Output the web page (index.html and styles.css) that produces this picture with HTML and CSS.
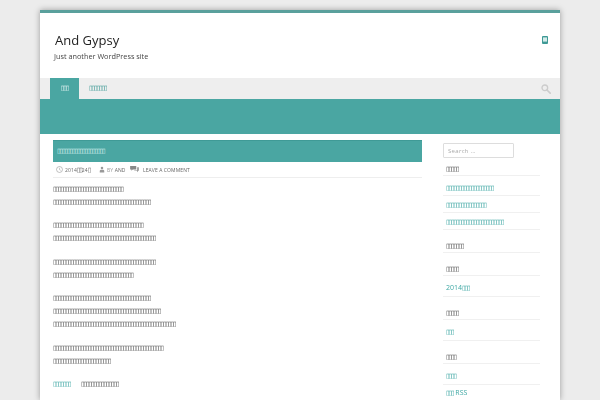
FILE: index.html
```html
<!DOCTYPE html>
<html lang="en">
<head>
<meta charset="utf-8">
<title>And Gypsy</title>
<link rel="stylesheet" href="styles.css">
</head>
<body>
<div class="page">
  <header class="masthead">
    <div class="branding">
      <h1 class="site-title">And Gypsy</h1>
      <p class="tagline">Just another WordPress site</p>
    </div>
    <svg class="phone" viewBox="0 0 6 8" width="6" height="8"><path fill="#3f9a96" d="M1 0h4a1 1 0 0 1 1 1v6a1 1 0 0 1-1 1H1a1 1 0 0 1-1-1V1a1 1 0 0 1 1-1z"/><rect x="1" y="1.400" width="4" height="4.200" fill="#d5ecea"/></svg>
  </header>
  <nav class="nav">
    <a class="nav-item active t">▯▯▯</a>
    <a class="nav-item t">▯▯▯▯▯▯▯</a>
    <svg class="search-icon" viewBox="0 0 12 12" width="10" height="10"><circle cx="4.600" cy="4.600" r="3.400" fill="none" stroke="#ccc" stroke-width="1.600"/><path d="M7.200 7.200 11 11" stroke="#ccc" stroke-width="2" stroke-linecap="round"/></svg>
  </nav>
  <div class="band"></div>
  <div class="columns">
    <main class="main">
      <h2 class="post-title t">▯▯▯▯▯▯▯▯▯▯▯▯▯▯▯▯▯▯▯</h2>
      <div class="meta">
        <svg class="meta-icon clock" viewBox="0 0 8 8" width="7" height="7"><circle cx="4" cy="4" r="3.400" fill="none" stroke="#999" stroke-width=".7"/><path d="M4 2v2.200l1.400.8" fill="none" stroke="#999" stroke-width=".6"/></svg>
        <span class="meta-text date">2014<span class="t">▯▯</span>24<span class="t">▯</span></span>
        <svg class="meta-icon user" viewBox="0 0 8 8" width="6" height="7"><circle cx="4" cy="2" r="1.700" fill="#999"/><path d="M1 8V6c0-1 1-1.600 3-1.600S7 5 7 6v2z" fill="#999"/></svg>
        <span class="meta-text author"><span class="by">BY</span> AND</span>
        <svg class="meta-icon bubble" viewBox="0 0 10 8" width="9" height="7"><path d="M0 0h7v4H3L1.500 5.500V4H0z" fill="#888"/><path d="M8 1.500h2v4H9v1.500L7.500 5.500H4.500L5 4.800h3z" fill="#999"/></svg>
        <span class="meta-text">LEAVE A COMMENT</span>
      </div>
      <article class="content t">
        <p>▯▯▯▯▯▯▯▯▯▯▯▯▯▯▯▯▯▯▯▯▯▯▯▯▯▯▯▯<br>▯▯▯▯▯▯▯▯▯▯▯▯▯▯▯▯▯▯▯▯▯▯▯▯▯▯▯▯▯▯▯▯▯▯▯▯▯▯▯</p>
        <p>▯▯▯▯▯▯▯▯▯▯▯▯▯▯▯▯▯▯▯▯▯▯▯▯▯▯▯▯▯▯▯▯▯▯▯▯<br>▯▯▯▯▯▯▯▯▯▯▯▯▯▯▯▯▯▯▯▯▯▯▯▯▯▯▯▯▯▯▯▯▯▯▯▯▯▯▯▯▯</p>
        <p>▯▯▯▯▯▯▯▯▯▯▯▯▯▯▯▯▯▯▯▯▯▯▯▯▯▯▯▯▯▯▯▯▯▯▯▯▯▯▯▯▯<br>▯▯▯▯▯▯▯▯▯▯▯▯▯▯▯▯▯▯▯▯▯▯▯▯▯▯▯▯▯▯▯▯</p>
        <p>▯▯▯▯▯▯▯▯▯▯▯▯▯▯▯▯▯▯▯▯▯▯▯▯▯▯▯▯▯▯▯▯▯▯▯▯▯▯▯<br>▯▯▯▯▯▯▯▯▯▯▯▯▯▯▯▯▯▯▯▯▯▯▯▯▯▯▯▯▯▯▯▯▯▯▯▯▯▯▯▯▯▯▯<br>▯▯▯▯▯▯▯▯▯▯▯▯▯▯▯▯▯▯▯▯▯▯▯▯▯▯▯▯▯▯▯▯▯▯▯▯▯▯▯▯▯▯▯▯▯▯▯▯▯</p>
        <p>▯▯▯▯▯▯▯▯▯▯▯▯▯▯▯▯▯▯▯▯▯▯▯▯▯▯▯▯▯▯▯▯▯▯▯▯▯▯▯▯▯▯▯▯<br>▯▯▯▯▯▯▯▯▯▯▯▯▯▯▯▯▯▯▯▯▯▯▯</p>
        <p><a class="teal">▯▯▯▯▯▯▯</a><span class="after-link">▯▯▯▯▯▯▯▯▯▯▯▯▯▯▯</span></p>
      </article>
    </main>
    <aside class="sidebar">
      <input class="search" placeholder="Search …">
      <h3 class="widget-title first t">▯▯▯▯▯</h3>
      <ul class="links t">
        <li>▯▯▯▯▯▯▯▯▯▯▯▯▯▯▯▯▯▯▯</li>
        <li>▯▯▯▯▯▯▯▯▯▯▯▯▯▯▯▯</li>
        <li>▯▯▯▯▯▯▯▯▯▯▯▯▯▯▯▯▯▯▯▯▯▯▯</li>
      </ul>
      <h3 class="widget-title t">▯▯▯▯▯▯▯</h3>
      <h3 class="widget-title t">▯▯▯▯▯</h3>
      <ul class="links big"><li>2014<span class="t">▯▯▯</span></li></ul>
      <h3 class="widget-title t">▯▯▯▯▯</h3>
      <ul class="links big"><li><span class="t">▯▯▯</span></li></ul>
      <h3 class="widget-title t">▯▯▯▯</h3>
      <ul class="links big"><li><span class="t">▯▯▯▯</span></li><li class="rss"><span class="t">▯▯▯</span> RSS</li></ul>
    </aside>
  </div>
</div>
</body>
</html>
```
FILE: styles.css
```css
html, body { margin: 0; height: 400px; overflow: hidden; }
body { background: #ececec; font-family: "Open Sans", "DejaVu Sans", sans-serif; color: #333; padding-top: 10px; box-sizing: border-box; }
.t { font-family: "DejaVu Sans", sans-serif; font-size: 6.500px; letter-spacing: -1.075px; font-weight: 400; }
.page { width: 520px; height: 390px; margin-left: 40px; background: #fff; border-top: 3px solid #5aa09c; box-shadow: 0 0 6px rgba(0,0,0,.35); overflow: hidden; box-sizing: border-box; filter: blur(.3px); }
.masthead { height: 65px; display: flex; justify-content: space-between; padding: 20px 12px 0 15px; box-sizing: border-box; }
.site-title { margin: 0; font-size: 13px; line-height: 15px; font-weight: 400; color: #222; }
.tagline { margin: 3px 0 0 -1px; font-size: 7.300px; line-height: 10px; color: #444; }
.phone { margin-top: 3px; }
.nav { height: 21px; background: #eee; display: flex; align-items: center; padding-left: 10px; }
.nav-item { height: 21px; line-height: 21px; padding: 0 10px; color: #3f9a96; }
.nav-item.active { width: 29px; box-sizing: border-box; background: #4aa6a2; color: #e6f4f3; text-align: center; padding: 0; }
.search-icon { margin-left: auto; margin-right: 9px; }
.band { height: 35px; background: #4aa6a2; }
.columns { display: flex; padding: 6px 0 0 13px; }
.main { width: 369px; }
.post-title { margin: 0; height: 22px; background: #4aa6a2; color: #d9efee; line-height: 21px; padding-left: 4px; box-sizing: border-box; border-top: 1px solid #3f9a96; }
.meta { height: 15px; display: flex; align-items: center; padding-left: 3px; border-bottom: 1px solid #eee; font-size: 5px; color: #666; white-space: nowrap; }
.meta-icon { flex: none; }
.meta-text { letter-spacing: .1px; }
.clock { margin-right: 2px; }
.date { width: 34px; }
.user { margin-right: 2px; }
.author { width: 23px; }
.bubble { margin: 0 4px 0 0; }
.by { color: #999; }
.content { padding-top: 4.500px; color: #555; line-height: 13.150px; }
.content p { margin: 0 0 10.200px; }
.teal { color: #3fa8a4; }
.after-link { margin-left: 10.500px; }
.sidebar { width: 97px; margin-left: 21px; padding-top: 3px; }
.search { display: block; width: 71px; height: 15px; box-sizing: border-box; border: 1px solid #ddd; border-radius: 1px; padding: 0 4px; font: 6px "Open Sans", sans-serif; letter-spacing: .3px; }
.search::placeholder { color: #aaa; }
.widget-title { margin: 0; padding: 13px 0 2px 3px; line-height: 7px; color: #555; border-bottom: 1px solid #f0f0f0; }
.widget-title.first { padding-top: 8px; }
.links { list-style: none; margin: 3px 0 0; padding: 0; color: #3fa8a4; line-height: 7px; }
.links li { padding: 6px 0 3px 3px; border-bottom: 1px solid #f0f0f0; }
.links.big { margin: 0; font-size: 7px; line-height: 10px; }
.links.big li { padding: 7px 0 3px 3px; }
.links.big li.rss { padding-top: 3px; }
```
